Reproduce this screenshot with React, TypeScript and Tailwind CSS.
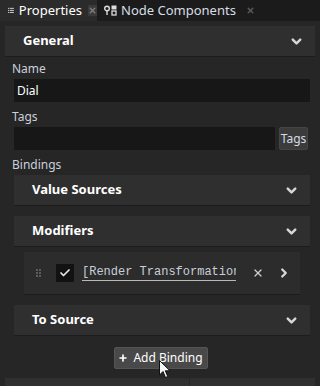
import { Check, ChevronDown, ChevronRight, X, Plus } from "lucide-react";

function SectionHeader({ title, className }: { title: string; className: string }) {
  return (
    <div className={`flex items-center justify-between bg-[#2f2f2f] h-[30px] shadow-[0_1px_0_#1c1c1c] ${className}`}>
      <span className="text-[13px] font-bold text-white">{title}</span>
      <ChevronDown className="w-[15px] h-[15px] text-[#d6d6d6]" strokeWidth={4} />
    </div>
  );
}

function ListIcon() {
  return (
    <svg width="10" height="9" viewBox="0 0 10 9" className="text-[#e6e6e6]">
      <rect x="0" y="0" width="2" height="1.5" fill="currentColor" />
      <rect x="3" y="0" width="7" height="1.5" fill="currentColor" />
      <rect x="0" y="3.5" width="2" height="1.5" fill="currentColor" />
      <rect x="3" y="3.5" width="7" height="1.5" fill="currentColor" />
      <rect x="0" y="7" width="2" height="1.5" fill="currentColor" />
      <rect x="3" y="7" width="7" height="1.5" fill="currentColor" />
    </svg>
  );
}

function NodeIcon() {
  return (
    <svg width="13" height="11" viewBox="0 0 13 11" className="text-[#dcdcdc]">
      <circle cx="3" cy="3.5" r="2.3" fill="none" stroke="currentColor" strokeWidth="1.4" />
      <rect x="2.3" y="6" width="1.4" height="4" fill="currentColor" />
      <rect x="7.5" y="0.5" width="5" height="4" fill="currentColor" />
      <rect x="8" y="6" width="4" height="4" fill="none" stroke="currentColor" strokeWidth="1.3" />
    </svg>
  );
}

export default function App() {
  return (
    <div
      className="w-[320px] h-[386px] overflow-hidden bg-[#262626] relative"
      style={{ fontFamily: '"Noto Sans", "Open Sans", sans-serif' }}
    >
      {/* tabs */}
      <div className="flex h-[21px] bg-[#1b1b1b]">
        <div className="flex items-center w-[97px] bg-[#2b2b2b] pl-[8px]">
          <ListIcon />
          <span className="ml-[5px] text-[13px] text-white leading-none">Properties</span>
          <span className="ml-[6px] flex items-center justify-center w-[11px] h-[11px] bg-[#3a3a3a]">
            <X className="w-[9px] h-[9px] text-[#7a7a7a]" strokeWidth={4} />
          </span>
        </div>
        <div className="flex items-center pl-[7px]">
          <NodeIcon />
          <span className="ml-[4px] text-[13px] text-[#d8dde6] leading-none">Node Components</span>
          <X className="ml-[10px] w-[9px] h-[9px] text-[#5a5a5a]" strokeWidth={4} />
        </div>
      </div>

      <SectionHeader title="General" className="mt-[5px] mx-[5px] pl-[18px] pr-[11px]" />

      <div className="px-[12px]">
        <div className="mt-[4px] h-[18px] text-[12px] text-[#c9d0da] leading-[18px]">Name</div>
        <div className="ml-[2px] mt-[1px] w-[296px] h-[23px] bg-[#171717] flex items-center pl-[3px] text-[12px] text-white">
          Dial
        </div>
        <div className="mt-[6px] h-[18px] text-[12px] text-[#c9d0da] leading-[18px]">Tags</div>
        <div className="ml-[2px] mt-[1px] flex items-center gap-[4px]">
          <div className="w-[262px] h-[23px] bg-[#171717]" />
          <div className="h-[23px] w-[29px] rounded-[2px] bg-[#3b3b3b] border border-[#444] flex items-center justify-center text-[12px] text-[#d4dbe5]">
            Tags
          </div>
        </div>
        <div className="mt-[6px] h-[18px] text-[12px] text-[#c9d0da] leading-[18px]">Bindings</div>

        <div className="ml-[2px] w-[296px]">
          <SectionHeader title="Value Sources" className="mt-[1px] pl-[18px] pr-[11px]" />
          <SectionHeader title="Modifiers" className="mt-[11px] pl-[18px] pr-[11px]" />

          <div className="mt-[6px] mx-[10px] h-[42px] bg-[#2c2c2c] shadow-[0_1px_0_#1c1c1c] flex items-center pl-[12px]">
            <svg width="5" height="8" viewBox="0 0 5 8" className="text-[#5c5c5c]">
              <rect x="0" y="0" width="2" height="2" fill="currentColor" />
              <rect x="3" y="0" width="2" height="2" fill="currentColor" />
              <rect x="0" y="3" width="2" height="2" fill="currentColor" />
              <rect x="3" y="3" width="2" height="2" fill="currentColor" />
              <rect x="0" y="6" width="2" height="2" fill="currentColor" />
              <rect x="3" y="6" width="2" height="2" fill="currentColor" />
            </svg>
            <div className="ml-[15px] w-[18px] h-[18px] bg-[#121212] flex items-center justify-center">
              <Check className="w-[12px] h-[12px] text-[#e8e8e8]" strokeWidth={3.5} />
            </div>
            <div className="ml-[8px] w-[154px] overflow-hidden whitespace-nowrap border-b border-[#b8b8b8] text-[12px] leading-[15px] text-[#c9cfd8]"
              style={{ fontFamily: '"Liberation Mono", "DejaVu Sans Mono", monospace' }}>
              [Render Transformation]
            </div>
            <X className="ml-[16px] w-[12px] h-[12px] text-[#cfcfcf]" strokeWidth={2.5} />
            <ChevronRight className="ml-[13px] w-[14px] h-[14px] text-[#d6d6d6]" strokeWidth={4} />
          </div>

          <SectionHeader title="To Source" className="mt-[11px] pl-[18px] pr-[11px]" />
        </div>

        <div className="mt-[12px] flex justify-center">
          <div className="ml-[1px] h-[22px] w-[94px] rounded-[2px] bg-[#494949] border border-[#555] flex items-center justify-center gap-[5px] text-[12px] text-white">
            <Plus className="w-[10px] h-[10px]" strokeWidth={4} />
            Add Binding
          </div>
        </div>
      </div>

      <div className="mt-[9px] mx-[5px] h-[10px] bg-[#2f2f2f] flex">
        <div className="w-[185px] border-r border-[#262626]" />
      </div>

      {/* mouse cursor */}
      <svg className="absolute left-[159px] top-[360px]" width="12" height="19" viewBox="0 0 12 19">
        <path d="M0.5 0.5 L0.5 15 L4 11.5 L6.5 17.5 L8.8 16.5 L6.3 10.8 L11 10.8 Z" fill="#f5f5f5" stroke="#111" strokeWidth="1" />
      </svg>
    </div>
  );
}
